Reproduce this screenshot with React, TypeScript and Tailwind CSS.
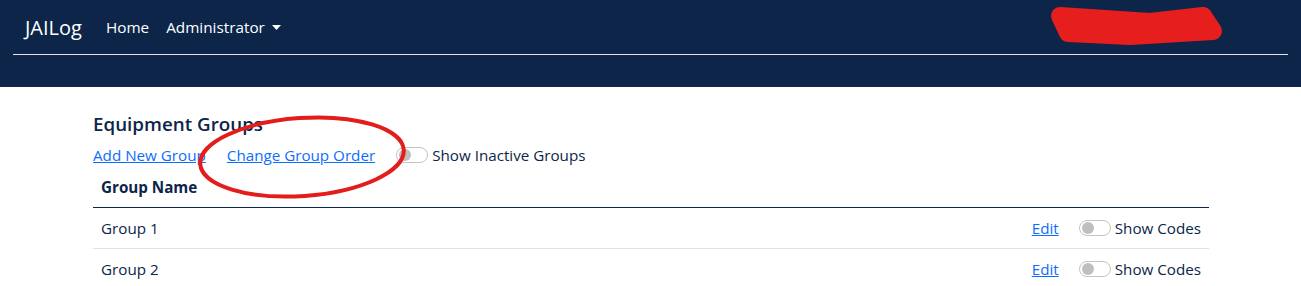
import React from "react";

function Toggle() {
  return (
    <span className="inline-flex h-[16px] w-[32px] items-center rounded-full border border-[#c4c4c4] bg-white px-[2px]">
      <span className="h-[12px] w-[12px] rounded-full bg-[#bfbfbf]" />
    </span>
  );
}

const rows = ["Group 1", "Group 2"];

export default function App() {
  return (
    <div className="relative min-h-[286px] bg-white font-['Open_Sans',sans-serif] text-[15.2px] text-[#0c2549]">
      <nav className="h-[87px] bg-[#0c2549] px-[13px] pt-[12px]">
        <div className="flex h-[31px] items-center pl-[12px]">
          <span className="text-[20px] text-white">JAILog</span>
          <span className="ml-[24px] text-[15.3px] text-white">Home</span>
          <span className="ml-[17px] flex items-center text-[15.3px] text-white">
            Administrator
            <svg width="9" height="5" viewBox="0 0 9 5" className="ml-[7px]">
              <path d="M0 0 L9 0 L4.5 5 Z" fill="white" />
            </svg>
          </span>
        </div>
        <div className="mt-[11px] h-px bg-[#dfe4ee]" />
      </nav>

      <main className="ml-[93px] w-[1116px] pt-[25px]">
        <h5 className="text-[18.8px] font-semibold leading-[24px]">Equipment Groups</h5>
        <div className="mt-[7px] flex h-[24px] items-center">
          <a className="text-[#0d6efd] underline">Add New Group</a>
          <a className="ml-[21px] text-[#0d6efd] underline">Change Group Order</a>
          <span className="ml-[21px] flex items-center gap-[4px]">
            <Toggle />
            <span>Show Inactive Groups</span>
          </span>
        </div>
        <table className="mt-[2px] w-full border-collapse">
          <thead>
            <tr className="border-b border-[#0c2549]">
              <th className="h-[38px] px-[8px] text-left font-bold">Group Name</th>
              <th />
            </tr>
          </thead>
          <tbody>
            {rows.map((r) => (
              <tr key={r} className="border-b border-[#dee2e6]">
                <td className="h-[41px] px-[8px] pt-[2px]">{r}</td>
                <td className="px-[8px] pt-[2px] text-right">
                  <span className="inline-flex items-center">
                    <a className="text-[#0d6efd] underline">Edit</a>
                    <span className="ml-[20px] flex items-center gap-[4px]">
                      <Toggle />
                      <span>Show Codes</span>
                    </span>
                  </span>
                </td>
              </tr>
            ))}
          </tbody>
        </table>
      </main>

      <svg className="pointer-events-none absolute left-0 top-0" width="1301" height="286">
        <ellipse cx="302" cy="157" rx="102" ry="39" transform="rotate(-4 302 157)" fill="none" stroke="#e31c1c" strokeWidth="4" />
        <path
          d="M1060 16 L1150 22 L1203 16 L1213 31 L1130 36 L1068 33 Z"
          fill="#e61e1e"
          stroke="#e61e1e"
          strokeWidth="18"
          strokeLinejoin="round"
        />
      </svg>
    </div>
  );
}
